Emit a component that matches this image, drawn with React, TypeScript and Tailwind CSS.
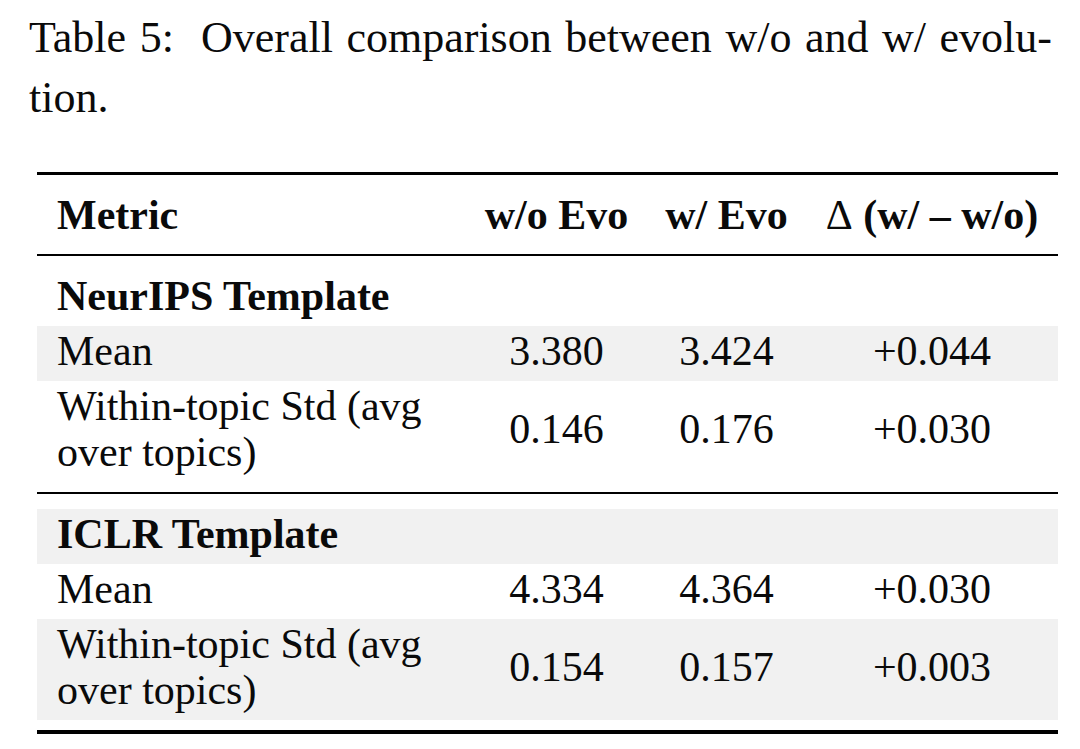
import React from "react";

const serif = { fontFamily: '"Liberation Serif", "Times New Roman", serif' };

type Row = {
  label: React.ReactNode;
  a: string;
  b: string;
  d: string;
  shaded: boolean;
  tall?: boolean;
};

function DataRow({ label, a, b, d, shaded, tall }: Row) {
  return (
    <div
      className={`flex items-center pb-[5px] ${tall ? "h-[101px]" : "h-[55px]"} ${
        shaded ? "bg-[#f1f1f1]" : "bg-white"
      }`}
    >
      <div className="w-[429px] pl-[20px] pr-[20px] leading-[46px]">{label}</div>
      <div className="w-[181px] text-center leading-[46px]">{a}</div>
      <div className="w-[159px] text-center leading-[46px]">{b}</div>
      <div className="w-[252px] text-center leading-[46px]">{d}</div>
    </div>
  );
}

function GroupRow({ title, shaded }: { title: string; shaded: boolean }) {
  return (
    <div className={`flex items-center pb-[5px] h-[55px] ${shaded ? "bg-[#f1f1f1]" : "bg-white"}`}>
      <div className="pl-[20px] font-bold leading-[46px]">{title}</div>
    </div>
  );
}

const within = (
  <>
    Within-topic Std (avg
    <br />
    over topics)
  </>
);

export default function App() {
  return (
    <div className="w-[1080px] h-[749px] bg-white text-[#0a0a0a] overflow-hidden" style={serif}>
      <div className="pt-[8px] ml-[29px] w-[1023px] text-[44px] leading-[60px]">
        <div className="text-justify [text-align-last:justify]">
          Table 5:&nbsp; Overall comparison between w/o and w/ evolu-
        </div>
        <div>tion.</div>
      </div>

      <div className="mt-[44px] ml-[37px] w-[1021px] text-[42px]">
        <div className="h-[3px] bg-black" />
        <div className="h-[15px]" />
        <div className="flex items-center pb-[5px] h-[55px] font-bold">
          <div className="w-[429px] pl-[20px] leading-[46px]">Metric</div>
          <div className="w-[181px] text-center leading-[46px]">w/o Evo</div>
          <div className="w-[159px] text-center leading-[46px]">w/ Evo</div>
          <div className="w-[252px] text-center leading-[46px]">
            <span className="font-normal">Δ</span> (w/ – w/o)
          </div>
        </div>
        <div className="h-[9px]" />
        <div className="h-[2px] bg-black" />
        <div className="h-[15px]" />
        <GroupRow title="NeurIPS Template" shaded={false} />
        <DataRow label="Mean" a="3.380" b="3.424" d="+0.044" shaded={true} />
        <DataRow label={within} a="0.146" b="0.176" d="+0.030" shaded={false} tall />
        <div className="h-[10px]" />
        <div className="h-[2px] bg-black" />
        <div className="h-[15px]" />
        <GroupRow title="ICLR Template" shaded={true} />
        <DataRow label="Mean" a="4.334" b="4.364" d="+0.030" shaded={false} />
        <DataRow label={within} a="0.154" b="0.157" d="+0.003" shaded={true} tall />
        <div className="h-[10px]" />
        <div className="h-[4px] bg-black" />
      </div>
    </div>
  );
}
